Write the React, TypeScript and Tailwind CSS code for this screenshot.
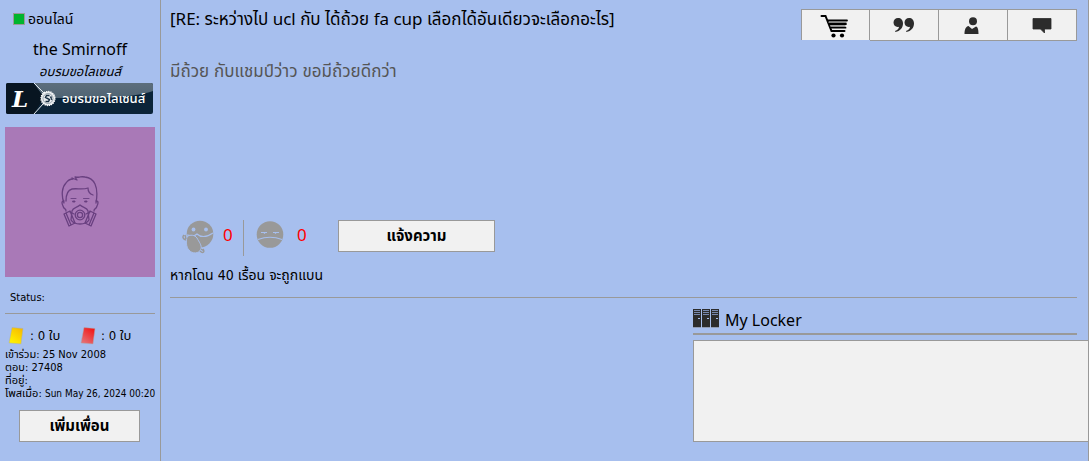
import type { ReactNode } from "react";

const font = "font-['DejaVu_Sans_Condensed','DejaVu_Sans','Noto_Sans_Thai',sans-serif]";
const latin = "font-['Noto_Sans','Noto_Sans_Thai',sans-serif]";

function LicenceBadge() {
  return (
    <svg viewBox="0 0 147 31" className="block h-[31px] w-[147px]" role="img" aria-label="อบรมขอไลเซนส์">
      <defs>
        <linearGradient id="gloss" x1="0" y1="0" x2="0" y2="1">
          <stop offset="0" stopColor="#5d6e7c" />
          <stop offset="1" stopColor="#506474" />
        </linearGradient>
      </defs>
      <rect width="147" height="31" rx="2" fill="#0b2439" />
      <path d="M28 0H145Q147 0 147 2V8C128 15 91 15 62 15H38Z" fill="url(#gloss)" />
      <path d="M2 0H27L38 14L28 31H2Q0 31 0 29V2Q0 0 2 0Z" fill="#081521" />
      <path d="M28 0L38 10M28 31L37 21" stroke="#e5e9ed" strokeWidth="1" />
      <circle cx="42" cy="15.5" r="7" fill="#e8ecef" stroke="#fff" strokeWidth="1.3" strokeDasharray="1.2 1" />
      <circle cx="42" cy="15.5" r="5" fill="none" stroke="#6b7a87" strokeWidth="0.6" />
      <path d="M43.5 12.5H40.5L39.5 14.500L43.5 16.500L42.5 18.500H39.5" fill="none" stroke="#152c40" strokeWidth="1.4" />
      <path d="M46 14H44.500L46 17" fill="none" stroke="#152c40" strokeWidth="1.1" />
      <text x="6" y="24" className="fill-white font-['DejaVu_Serif',serif] text-[23px] font-bold italic">L</text>
      <text x="56" y="20" className="fill-white font-['Noto_Sans_Thai','Noto_Sans',sans-serif] text-[13px] font-medium">อบรมขอไลเซนส์</text>
    </svg>
  );
}

function MaskedFace() {
  return (
    <svg viewBox="0 0 40 52" className="h-[52px] w-10" fill="none" stroke="#694080" strokeWidth="1.3" strokeLinejoin="round" strokeLinecap="round">
      <path d="M4 27C1 19 2 11 6 7C8 4 11 3 13 3L12 2L17 4L15 1C22 2 19 0 25 1C34 2 39 10 36 27" />
      <path d="M6 25C6 18 8 14 12 13C17 12 22 14 28 12C28 15 30 18 33 19" />
      <path d="M4 25C1 25 2 28 3 30C4 34 6 32 6 35M36 25C39 25 38 28 37 30C36 34 34 32 34 35" />
      <path d="M11 22.500H16M23.500 22.500H29" strokeWidth="0.9" />
      <path d="M13 25H15V26H13ZM25 25H27V26H25Z" fill="#694080" strokeWidth="0.9" />
      <path d="M12 35C13 31 17 32 20 29C23 32 27 31 28 35L29 44C27 47 24 48 20 48C16 48 13 47 11 44Z" />
      <circle cx="20" cy="39" r="4.800" />
      <circle cx="20" cy="39" r="2.600" />
      <path d="M4 38L10 35L15 47L9 50ZM36 38L30 35L25 47L31 50ZM6 37L11 49M34 37L29 49" />
      <path d="M10 36L14 38M30 36L26 38" />
    </svg>
  );
}

function PenaltyCard({ id, from, to }: { id: string; from: string; to: string }) {
  return (
    <svg viewBox="0 0 17 19" className="h-[19px] w-[17px]" aria-hidden="true">
      <defs>
        <linearGradient id={id} x1="1" y1="0" x2="0.4" y2="1">
          <stop offset="0" stopColor={from} />
          <stop offset="1" stopColor={to} />
        </linearGradient>
      </defs>
      <path d="M4 0.500L15 1.500L13 17L1 16Z" fill={`url(#${id})`} stroke="#a9adb5" strokeWidth="0.5" />
    </svg>
  );
}

function CartIcon() {
  return (
    <svg viewBox="0 0 28 24" className="h-6 w-7" fill="none" stroke="#000" strokeLinecap="round" aria-hidden="true">
      <path d="M1.5 2H5.5L11.5 17H24.500" strokeWidth="2" />
      <path d="M8 6.500H27M9.500 10H26" strokeWidth="1.800" />
      <path d="M9 8.300H26M10.500 11.800H25" stroke="#888" strokeWidth="1.200" />
      <path d="M11 13.700H25.500" strokeWidth="1.800" />
      <circle cx="13.5" cy="21.5" r="2.100" fill="#000" stroke="none" />
      <circle cx="22" cy="21.5" r="2.100" fill="#000" stroke="none" />
    </svg>
  );
}

function QuoteIcon() {
  return (
    <svg viewBox="0 0 22 14" className="h-3.5 w-[22px]" fill="#2c2c2c" aria-hidden="true">
      <path d="M5 0C8 0 10 2 10 5.5C10 10 7 13 2.500 14L2 13C4.500 12 6 10.500 6 8.700C3 9.500 0.500 7.500 0.500 4.500C0.500 2 2.500 0 5 0Z" />
      <path d="M16 0C19 0 21 2 21 5.500C21 10 18 13 13.500 14L13 13C15.500 12 17 10.500 17 8.700C14 9.500 11.500 7.500 11.500 4.500C11.500 2 13.500 0 16 0Z" />
    </svg>
  );
}

function UserIcon() {
  return (
    <svg viewBox="0 0 15 17" className="mr-1 h-[17px] w-[15px]" fill="#2c2c2c" aria-hidden="true">
      <circle cx="9" cy="4.300" r="4" />
      <path d="M0.500 17C0.500 12 2 9.500 4.500 9L8 12L12 9.500C14 10 14.500 13 14.500 17Z" />
    </svg>
  );
}

function ChatIcon() {
  return (
    <svg viewBox="0 0 20 16" className="h-4 w-5" fill="#2c2c2c" aria-hidden="true">
      <path d="M1 1.500H19V12H12.500V16L8.500 12H1Z" stroke="#2c2c2c" strokeWidth="0.800" strokeLinejoin="round" />
    </svg>
  );
}

function LaughFace() {
  return (
    <svg viewBox="0 0 32 34" className="h-[34px] w-8" fill="#999" aria-hidden="true">
      <circle cx="18" cy="14" r="13.300" />
      <circle cx="11.500" cy="9.500" r="1.900" fill="#a7bfee" />
      <circle cx="24" cy="9.500" r="1.900" fill="#a7bfee" />
      <path d="M5 15C9 16 12 17 15 14C18 17 24 18 31 13" fill="none" stroke="#a7bfee" strokeWidth="1.200" />
      <path d="M5 17C8 14 13 15 15 18C17 22 20 25 19 29C17 34 10 34 7 30C4 27 4 21 5 17Z" stroke="#a7bfee" strokeWidth="1" />
      <path d="M4 20C1 19 0 17 2 15M4 19L3 15M18 31C21 34 23 32 21 29M19 29L22 31" fill="none" stroke="#999" strokeWidth="1.400" />
    </svg>
  );
}

function SadFace() {
  return (
    <svg viewBox="0 0 28 28" className="h-7 w-7" fill="#999" aria-hidden="true">
      <circle cx="14" cy="14.500" r="13.300" />
      <path d="M5 12.500H11M17 12.500H23M2 19.500Q14 15 26 19.500" fill="none" stroke="#a7bfee" strokeWidth="1.200" />
      <path d="M7 12.500H10L8.500 14ZM18 12.500H21L19.500 14Z" fill="#a7bfee" />
    </svg>
  );
}

function LockerIcon() {
  return (
    <svg viewBox="0 0 26 19" className="h-[19px] w-[26px]" aria-hidden="true">
      {[0, 9, 18].map((x) => (
        <g key={x} transform={`translate(${x} 0)`}>
          <path d="M0 0H8V18H0Z" fill="#2c2c2c" />
          <path d="M1 1.500H7M1 3.500H7M1 5.500H7" stroke="#7889af" strokeWidth="1" />
          <path d="M5 9.500H7" stroke="#a7bfee" strokeWidth="1" />
          <path d="M0 18.500H8" stroke="#929cb2" strokeWidth="1" />
        </g>
      ))}
    </svg>
  );
}

function ToolButton({ label, children }: { label: string; children: ReactNode }) {
  return (
    <button aria-label={label} className="flex h-8 w-[69px] items-center justify-center border border-l-0 border-[#999] bg-[#f1f1f1]">
      {children}
    </button>
  );
}

export default function App() {
  return (
    <div className={`flex min-h-screen overflow-hidden border-r border-[#999] bg-[#a7bfee] text-black ${font}`}>
      <aside className="w-[161px] shrink-0 border-r border-[#999] pt-2.5 pb-5">
        <div className="flex h-[18px] items-center gap-[3px] pl-[13px] text-[14px] leading-[18px]">
          <span className="h-3 w-3 border border-[#999] bg-[#00b52d]" />
          ออนไลน์
        </div>
        <h2 className={`mt-[11px] text-center text-[16px] leading-5 ${latin}`}>the Smirnoff</h2>
        <p className="mt-[5px] text-center text-[13px] leading-4 italic">อบรมขอไลเซนส์</p>
        <div className="mt-[3px] pl-1.5">
          <LicenceBadge />
        </div>
        <div className="mt-[13px] ml-[5px] flex h-[150px] w-[150px] items-center justify-center bg-[#a979b7]">
          <MaskedFace />
        </div>
        <p className="mt-[13px] pl-2.5 text-[11px] leading-4">Status:</p>
        <hr className="mx-[5px] mt-[7px] border-[#999]" />
        <div className="mt-3 flex h-5 items-center pl-2 text-[13px] leading-5">
          <PenaltyCard id="yellow-card" from="#f6b400" to="#fff000" />
          <span className="ml-[5px] w-[50px] whitespace-nowrap">: 0 ใบ</span>
          <PenaltyCard id="red-card" from="#f40b0b" to="#e56c70" />
          <span className="ml-1 whitespace-nowrap">: 0 ใบ</span>
        </div>
        <div className="mt-0.5 pl-[5px] text-[11px] leading-[13px] whitespace-nowrap">
          <p>เข้าร่วม: 25 Nov 2008</p>
          <p>ตอบ: 27408</p>
          <p>ที่อยู่:</p>
          <p>โพสเมื่อ: <span className="text-[10px]">Sun May 26, 2024 00:20</span></p>
        </div>
        <button className="mt-2.5 ml-[19px] h-8 w-[121px] border border-[#999] bg-[#f1f1f1] text-[15px] leading-5 font-bold">เพิ่มเพื่อน</button>
      </aside>

      <main className="min-w-0 flex-1 pt-[9px] pr-[11px] pl-[9px]">
        <header className="flex h-8 items-start justify-between">
          <h1 className={`text-[17px] leading-5 whitespace-nowrap ${latin}`}>[RE: ระหว่างไป ucl กับ ได้ถ้วย fa cup เลือกได้อันเดียวจะเลือกอะไร]</h1>
          <nav className="flex items-start">
            <button aria-label="Shop" className="flex h-[31px] w-[69px] items-center justify-center border border-b-0 border-[#999] bg-[#f1f1f1] pt-0.5 pr-1">
              <CartIcon />
            </button>
            <ToolButton label="Quote"><QuoteIcon /></ToolButton>
            <ToolButton label="Profile"><UserIcon /></ToolButton>
            <ToolButton label="Message"><ChatIcon /></ToolButton>
          </nav>
        </header>

        <p className="mt-5 h-[159px] text-[17px] leading-5 text-[#555]">มีถ้วย กับแชมป์ว่าว ขอมีถ้วยดีกว่า</p>

        <div className="flex h-9 items-start">
          <button className="flex h-9 w-[74px] items-start gap-[9px] border-r border-[#999] pl-3" aria-label="Like">
            <LaughFace />
            <span className={`text-[17px] leading-[30px] text-[#f00] ${latin}`}>0</span>
          </button>
          <button className="flex w-[94px] items-start gap-[13px] pl-3" aria-label="Dislike">
            <SadFace />
            <span className={`text-[17px] leading-[30px] text-[#f00] ${latin}`}>0</span>
          </button>
          <button className="h-8 w-[157px] border border-[#999] bg-[#f1f1f1] text-[15px] leading-5 font-bold">แจ้งความ</button>
        </div>
        <p className="mt-2.5 text-[14px] leading-[18px]">หากโดน 40 เรื้อน จะถูกแบน</p>
        <hr className="mt-[13px] border-[#999]" />

        <section className="mt-[11px] ml-auto w-[384px]">
          <div className="flex h-[26px] items-start gap-1.5 border-b-2 border-[#999]">
            <LockerIcon />
            <h2 className={`text-[16px] leading-[22px] ${latin}`}>My Locker</h2>
          </div>
          <div className="relative mt-[5px] -mr-6 h-[102px] border border-[#999] bg-[#f1f1f1]" />
        </section>
      </main>
    </div>
  );
}
